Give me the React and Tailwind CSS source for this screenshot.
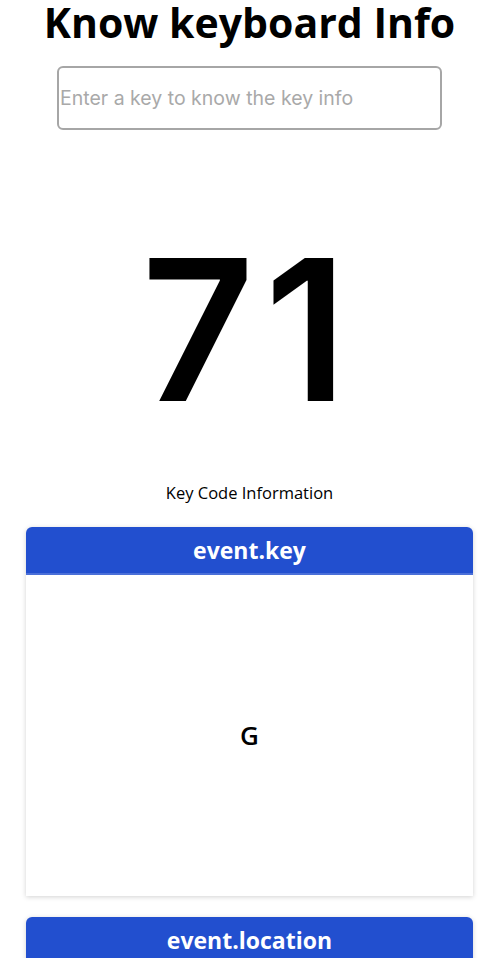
import React from 'react';

const InfoCard = ({ title, value }) => (
  <section className="w-full shrink-0 rounded-t-md overflow-hidden shadow-[0_1px_5px_rgba(0,0,0,0.18)]">
    <div className="h-[48px] bg-[#224fcf] border-b-2 border-[#4a6fd8] flex items-center justify-center">
      <h2 className="text-white text-[23px] font-bold">{title}</h2>
    </div>
    {value !== undefined && (
      <div className="h-[321px] bg-white flex items-center justify-center">
        <span className="text-[26px] font-semibold text-black">{value}</span>
      </div>
    )}
  </section>
);

export default function App() {
  return (
    <div className="h-[958px] overflow-hidden bg-white" style={{ fontFamily: '"Open Sans", sans-serif' }}>
      <div className="flex flex-col items-center pl-[6px]">
        <h1 className="text-[41px] font-bold leading-[44px] text-black whitespace-nowrap">Know keyboard Info</h1>
        <input
          placeholder="Enter a key to know the key info"
          className="mt-[22px] block w-[385px] h-16 border-2 border-[#a6a6a6] rounded-md px-[1px] text-[19.5px] placeholder:text-[#a9a9a9] outline-none"
          style={{ fontFamily: 'Inter, sans-serif' }}
        />
        <div className="mt-[100px] text-[196px] leading-[200px] font-semibold tracking-[10px] text-black" style={{ fontFamily: 'Inter, sans-serif' }}>71</div>
        <p className="mt-[51px] text-[16.5px] text-black">Key Code Information</p>
        <div className="w-[447px] mt-[21px] flex flex-col gap-[21px]">
          <InfoCard title="event.key" value="G" />
          <InfoCard title="event.location" />
        </div>
      </div>
    </div>
  );
}
